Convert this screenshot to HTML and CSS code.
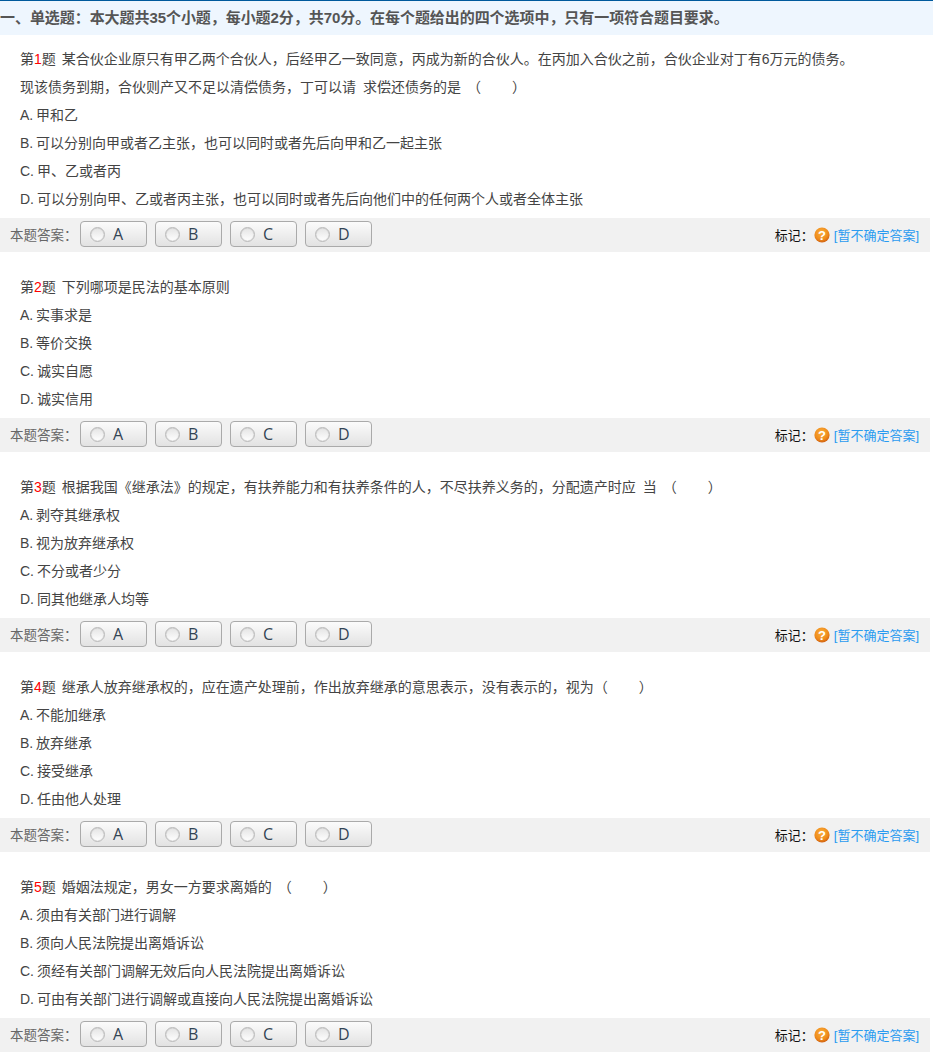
FILE: index.html
```html
<!DOCTYPE html>
<html lang="zh-CN">
<head>
    <meta charset="UTF-8">
    <title>单选题</title>
    <link rel="stylesheet" href="styles.css">
</head>
<body>

<svg class="defs" width="0" height="0">
    <defs>
        <radialGradient id="markFill" cx="45%" cy="35%" r="70%">
            <stop offset="0" stop-color="#fbb03a"/>
            <stop offset="0.65" stop-color="#ee8a1c"/>
            <stop offset="1" stop-color="#c8560f"/>
        </radialGradient>
    </defs>
</svg>

<div class="section-title">一、单选题：本大题共35个小题，每小题2分，共70分。在每个题给出的四个选项中，只有一项符合题目要求。</div>

<div class="question first">
    <p class="line stem"><span class="num">第<em>1</em>题</span>某合伙企业原只有甲乙两个合伙人，后经甲乙一致同意，丙成为新的合伙人。在丙加入合伙之前，合伙企业对丁有6万元的债务。<br>现该债务到期，合伙则产又不足以清偿债务，丁可以请 求偿还债务的是<span class="blank">（<i></i>）</span></p>
    <p class="line">A. 甲和乙</p>
    <p class="line">B. 可以分别向甲或者乙主张，也可以同时或者先后向甲和乙一起主张</p>
    <p class="line">C. 甲、乙或者丙</p>
    <p class="line">D. 可以分别向甲、乙或者丙主张，也可以同时或者先后向他们中的任何两个人或者全体主张</p>
</div>
<div class="answer-bar">
    <span class="answer-label">本题答案：</span>
    <label class="choice"><input type="radio" name="q1">A</label>
    <label class="choice"><input type="radio" name="q1">B</label>
    <label class="choice"><input type="radio" name="q1">C</label>
    <label class="choice"><input type="radio" name="q1">D</label>
    <span class="mark">标记：<svg class="mark-icon" viewBox="0 0 16 16"><circle cx="8" cy="8" r="7.6" fill="url(#markFill)"/><text x="8" y="12.8" text-anchor="middle">?</text></svg><a href="#">[暂不确定答案]</a></span>
</div>

<div class="question">
    <p class="line stem"><span class="num">第<em>2</em>题</span>下列哪项是民法的基本原则</p>
    <p class="line">A. 实事求是</p>
    <p class="line">B. 等价交换</p>
    <p class="line">C. 诚实自愿</p>
    <p class="line">D. 诚实信用</p>
</div>
<div class="answer-bar">
    <span class="answer-label">本题答案：</span>
    <label class="choice"><input type="radio" name="q2">A</label>
    <label class="choice"><input type="radio" name="q2">B</label>
    <label class="choice"><input type="radio" name="q2">C</label>
    <label class="choice"><input type="radio" name="q2">D</label>
    <span class="mark">标记：<svg class="mark-icon" viewBox="0 0 16 16"><circle cx="8" cy="8" r="7.6" fill="url(#markFill)"/><text x="8" y="12.8" text-anchor="middle">?</text></svg><a href="#">[暂不确定答案]</a></span>
</div>

<div class="question">
    <p class="line stem"><span class="num">第<em>3</em>题</span>根据我国《继承法》的规定，有扶养能力和有扶养条件的人，不尽扶养义务的，分配遗产时应 当<span class="blank">（<i></i>）</span></p>
    <p class="line">A. 剥夺其继承权</p>
    <p class="line">B. 视为放弃继承权</p>
    <p class="line">C. 不分或者少分</p>
    <p class="line">D. 同其他继承人均等</p>
</div>
<div class="answer-bar">
    <span class="answer-label">本题答案：</span>
    <label class="choice"><input type="radio" name="q3">A</label>
    <label class="choice"><input type="radio" name="q3">B</label>
    <label class="choice"><input type="radio" name="q3">C</label>
    <label class="choice"><input type="radio" name="q3">D</label>
    <span class="mark">标记：<svg class="mark-icon" viewBox="0 0 16 16"><circle cx="8" cy="8" r="7.6" fill="url(#markFill)"/><text x="8" y="12.8" text-anchor="middle">?</text></svg><a href="#">[暂不确定答案]</a></span>
</div>

<div class="question">
    <p class="line stem"><span class="num">第<em>4</em>题</span>继承人放弃继承权的，应在遗产处理前，作出放弃继承的意思表示，没有表示的，视为<span class="blank tight">（<i></i>）</span></p>
    <p class="line">A. 不能加继承</p>
    <p class="line">B. 放弃继承</p>
    <p class="line">C. 接受继承</p>
    <p class="line">D. 任由他人处理</p>
</div>
<div class="answer-bar">
    <span class="answer-label">本题答案：</span>
    <label class="choice"><input type="radio" name="q4">A</label>
    <label class="choice"><input type="radio" name="q4">B</label>
    <label class="choice"><input type="radio" name="q4">C</label>
    <label class="choice"><input type="radio" name="q4">D</label>
    <span class="mark">标记：<svg class="mark-icon" viewBox="0 0 16 16"><circle cx="8" cy="8" r="7.6" fill="url(#markFill)"/><text x="8" y="12.8" text-anchor="middle">?</text></svg><a href="#">[暂不确定答案]</a></span>
</div>

<div class="question">
    <p class="line stem"><span class="num">第<em>5</em>题</span>婚姻法规定，男女一方要求离婚的<span class="blank">（<i></i>）</span></p>
    <p class="line">A. 须由有关部门进行调解</p>
    <p class="line">B. 须向人民法院提出离婚诉讼</p>
    <p class="line">C. 须经有关部门调解无效后向人民法院提出离婚诉讼</p>
    <p class="line">D. 可由有关部门进行调解或直接向人民法院提出离婚诉讼</p>
</div>
<div class="answer-bar">
    <span class="answer-label">本题答案：</span>
    <label class="choice"><input type="radio" name="q5">A</label>
    <label class="choice"><input type="radio" name="q5">B</label>
    <label class="choice"><input type="radio" name="q5">C</label>
    <label class="choice"><input type="radio" name="q5">D</label>
    <span class="mark">标记：<svg class="mark-icon" viewBox="0 0 16 16"><circle cx="8" cy="8" r="7.6" fill="url(#markFill)"/><text x="8" y="12.8" text-anchor="middle">?</text></svg><a href="#">[暂不确定答案]</a></span>
</div>

</body>
</html>
```

FILE: styles.css
```css
html, body { height: 1052px; overflow: hidden; }
body { margin: 0; background: #fff; color: #444; font-family: "Liberation Sans", "Noto Sans CJK SC", sans-serif; font-size: 14px; }
.defs { position: absolute; }
.section-title { height: 34px; line-height: 34px; border-top: 1px solid #005a9c; background: #eef6fe; color: #555; font-size: 15px; font-weight: bold; letter-spacing: -0.06px; white-space: nowrap; }
.question { padding: 21px 20px 0; }
.question.first { padding-top: 10px; }
.line { margin: 0; line-height: 28px; white-space: nowrap; word-spacing: -1px; }
.stem { word-spacing: 3px; }
.num { margin-right: 6px; }
.num em { font-style: normal; color: #f00; }
.blank { margin-left: 6px; }
.blank i { display: inline-block; width: 31px; }
.blank.tight { margin-left: 0; }
.answer-bar { display: flex; align-items: center; width: 930px; height: 34px; margin-top: 5px; background: #f1f1f1; color: #666; }
.answer-label { width: 80px; margin-bottom: 3px; padding-left: 10px; box-sizing: border-box; font-size: 13.5px; white-space: nowrap; }
.choice { display: flex; align-items: center; box-sizing: border-box; width: 67px; height: 26px; margin: 0 8px 2px 0; padding-left: 9px; border: 1px solid #aaa; border-radius: 4px; background: linear-gradient(#fbfbfb, #e2e2e2); color: #345; font-family: "Open Sans", sans-serif; font-size: 16px; }
.choice input { appearance: none; width: 15px; height: 15px; margin: 0 8px 0 0; border: 1px solid #bbb; border-radius: 50%; background: linear-gradient(#e4e4e4, #fff); box-shadow: inset 0 0 1px #999; }
.mark { display: flex; align-items: center; margin-left: auto; padding: 0 11px 2px 0; color: #111; font-size: 13px; white-space: nowrap; }
.mark-icon { width: 16px; height: 16px; margin: 2px 4px 0 0; }
.mark-icon text { fill: #fff; font: bold 13px "Liberation Sans", sans-serif; }
.mark a { color: #2a9bf0; text-decoration: none; }
```
